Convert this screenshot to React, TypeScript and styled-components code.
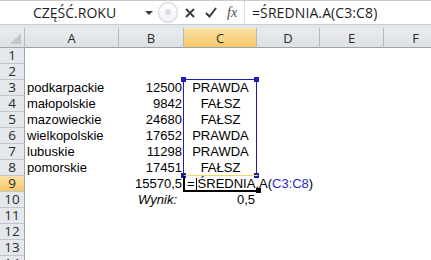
import React from "react";
import styled, { createGlobalStyle } from "styled-components";

const GlobalStyle = createGlobalStyle`
  html, body {
    margin: 0;
    padding: 0;
    background: #ffffff;
    overflow: hidden;
  }
`;

const Window = styled.div`
  width: 431px;
  height: 260px;
  overflow: hidden;
  background: #ffffff;
  display: flex;
  flex-direction: column;
`;

const FormulaBar = styled.div`
  flex: none;
  display: flex;
  align-items: stretch;
  height: 23px;
  border-top: 1px solid #c7ccd3;
  background: #ffffff;
  font-family: "Open Sans", "Noto Sans", sans-serif;
  font-size: 14px;
  color: #1e1e1e;
`;

const NameBox = styled.div`
  width: 160px;
  display: flex;
  align-items: center;
  justify-content: space-between;
  padding: 0 7px 0 33px;
  box-sizing: border-box;
`;

const Arrow = styled.span`
  width: 0;
  height: 0;
  border-left: 4px solid transparent;
  border-right: 4px solid transparent;
  border-top: 4px solid #3c3c3c;
`;

const Tools = styled.div`
  display: flex;
  align-items: center;
  width: 84px;
  box-sizing: border-box;
  position: relative;
  padding-left: 25px;
`;

const Knob = styled.span`
  position: absolute;
  left: -2px;
  top: 1px;
  width: 20px;
  height: 21px;
  border-radius: 50%;
  border: 1px solid #cfd4da;
  background: linear-gradient(#ffffff, #eef0f3);
  box-sizing: border-box;
  &::after {
    content: "";
    position: absolute;
    left: 6px;
    top: 6px;
    width: 6px;
    height: 6px;
    border-radius: 50%;
    background: #d9dde2;
  }
`;

const ToolIcon = styled.svg<{ $gap?: number }>`
  margin-right: ${(p) => p.$gap ?? 8}px;
  flex: none;
`;

const Fx = styled.span`
  font-family: "Liberation Serif", serif;
  font-style: italic;
  font-size: 14px;
  color: #4a4a4a;
`;

const FormulaInput = styled.div`
  flex: 1;
  display: flex;
  align-items: center;
  padding-left: 7px;
  border-left: 1px solid #dadde2;
  font-size: 14px;
  letter-spacing: 0.1px;
`;

const Spacer = styled.div`
  flex: none;
  height: 3px;
  border-top: 1px solid #c7ccd3;
  background: #e3e6ea;
`;

const Sheet = styled.div`
  flex: none;
  position: relative;
  display: grid;
  grid-template-columns: 25px 94px 65px 73px 63px 64px 64px;
  grid-template-rows: 20px;
  grid-auto-rows: 16px;
  font-family: "Liberation Sans", Arial, sans-serif;
  font-size: 13px;
  line-height: 16px;
  color: #000;
`;

const ColHead = styled.div<{ $active?: boolean }>`
  display: flex;
  align-items: center;
  justify-content: center;
  box-sizing: border-box;
  border-right: 1px solid #b4b9c0;
  border-bottom: 1px solid #9ea3aa;
  background: ${(p) =>
    p.$active
      ? "linear-gradient(#fbe2a6, #f5c869)"
      : "linear-gradient(#e8ebef, #dde1e6)"};
  font-family: "Open Sans", "Noto Sans", sans-serif;
  font-size: 13px;
  color: #2b2b2b;
`;

const Corner = styled(ColHead)`
  position: relative;
  &::after {
    content: "";
    position: absolute;
    right: 3px;
    bottom: 3px;
    border-left: 11px solid transparent;
    border-bottom: 11px solid #c3c7cc;
  }
`;

const RowHead = styled.div<{ $active?: boolean }>`
  display: flex;
  align-items: center;
  justify-content: center;
  box-sizing: border-box;
  border-right: 1px solid #9ea3aa;
  border-bottom: 1px solid #c3c7cd;
  background: ${(p) =>
    p.$active ? "linear-gradient(#fbe2a6, #f5c869)" : "#e4e7eb"};
  font-family: "Open Sans", "Noto Sans", sans-serif;
  font-size: 13.5px;
  line-height: 15px;
  color: #2b2b2b;
`;

const Cell = styled.div<{ $align?: "left" | "right" | "center"; $italic?: boolean }>`
  display: flex;
  align-items: center;
  justify-content: ${(p) =>
    p.$align === "right" ? "flex-end" : p.$align === "center" ? "center" : "flex-start"};
  padding: ${(p) => (p.$italic ? "0 7px 0 2px" : "0 2px")};
  font-style: ${(p) => (p.$italic ? "italic" : "normal")};
  white-space: nowrap;
  overflow: visible;
  min-width: 0;
`;

const EditCell = styled(Cell)`
  grid-column: span 2;
  position: relative;
  z-index: 2;
  padding-left: 3px;
`;

const Caret = styled.span`
  display: inline-block;
  width: 1px;
  height: 13px;
  background: #000;
  margin: 0 1px;
`;

const Ref = styled.span`
  color: #2a2ad0;
`;

const Range = styled.div`
  position: absolute;
  left: 183px;
  top: 51px;
  width: 74px;
  height: 97px;
  border: 1px solid #1d1dbb;
  box-sizing: border-box;
  pointer-events: none;
`;

const Handle = styled.span<{ $x: "l" | "r"; $y: "t" | "b"; $color?: string }>`
  position: absolute;
  width: 5px;
  height: 5px;
  background: ${(p) => p.$color || "#1d1dbb"};
  ${(p) => (p.$x === "l" ? "left: -3px;" : "right: -3px;")}
  ${(p) => (p.$y === "t" ? "top: -3px;" : "bottom: -3px;")}
`;

const Active = styled.div`
  position: absolute;
  left: 183px;
  top: 147px;
  width: 75px;
  height: 17px;
  border-left: 2px solid #000;
  border-bottom: 2px solid #000;
  border-top: 1px solid #e8d873;
  box-sizing: border-box;
  pointer-events: none;
  z-index: 3;
`;

const cols = ["A", "B", "C", "D", "E", "F"];

type Row = { a?: string; b?: string; c?: string };

const rows: Row[] = [
  {},
  {},
  { a: "podkarpackie", b: "12500", c: "PRAWDA" },
  { a: "małopolskie", b: "9842", c: "FAŁSZ" },
  { a: "mazowieckie", b: "24680", c: "FAŁSZ" },
  { a: "wielkopolskie", b: "17652", c: "PRAWDA" },
  { a: "lubuskie", b: "11298", c: "PRAWDA" },
  { a: "pomorskie", b: "17451", c: "FAŁSZ" },
];

const App = () => {
  return (
    <Window>
      <GlobalStyle />
      <FormulaBar>
        <NameBox>
          <span>CZĘŚĆ.ROKU</span>
          <Arrow />
        </NameBox>
        <Tools>
          <Knob />
          <ToolIcon width="10" height="10" viewBox="0 0 10 10" $gap={10}>
            <path d="M1 1 L9 9 M9 1 L1 9" stroke="#3a3a3a" strokeWidth="1.8" />
          </ToolIcon>
          <ToolIcon width="12" height="11" viewBox="0 0 12 11" $gap={10}>
            <path d="M1 6 L4.5 9.5 L11 1" stroke="#3a3a3a" strokeWidth="2" fill="none" />
          </ToolIcon>
          <Fx>fx</Fx>
        </Tools>
        <FormulaInput>=ŚREDNIA.A(C3:C8)</FormulaInput>
      </FormulaBar>
      <Spacer />
      <Sheet>
        <Corner />
        {cols.map((c) => (
          <ColHead key={c} $active={c === "C"}>
            {c}
          </ColHead>
        ))}
        {rows.map((r, i) => (
          <React.Fragment key={i}>
            <RowHead>{i + 1}</RowHead>
            <Cell>{r.a}</Cell>
            <Cell $align="right">{r.b}</Cell>
            <Cell $align="center">{r.c}</Cell>
            <Cell />
            <Cell />
            <Cell />
          </React.Fragment>
        ))}
        <RowHead $active>9</RowHead>
        <Cell />
        <Cell $align="right">15570,5</Cell>
        <EditCell>
          =<Caret />ŚREDNIA.A(<Ref>C3:C8</Ref>)
        </EditCell>
        <Cell />
        <Cell />
        <RowHead>10</RowHead>
        <Cell />
        <Cell $align="right" $italic>
          Wynik:
        </Cell>
        <Cell $align="right">0,5</Cell>
        <Cell />
        <Cell />
        <Cell />
        {[11, 12, 13, 14].map((n) => (
          <React.Fragment key={n}>
            <RowHead>{n}</RowHead>
            <Cell />
            <Cell />
            <Cell />
            <Cell />
            <Cell />
            <Cell />
          </React.Fragment>
        ))}
        <Range>
          <Handle $x="l" $y="t" />
          <Handle $x="r" $y="t" />
          <Handle $x="l" $y="b" />
          <Handle $x="r" $y="b" />
        </Range>
        <Active>
          <Handle $x="r" $y="b" $color="#000" />
        </Active>
      </Sheet>
    </Window>
  );
};

export default App;
